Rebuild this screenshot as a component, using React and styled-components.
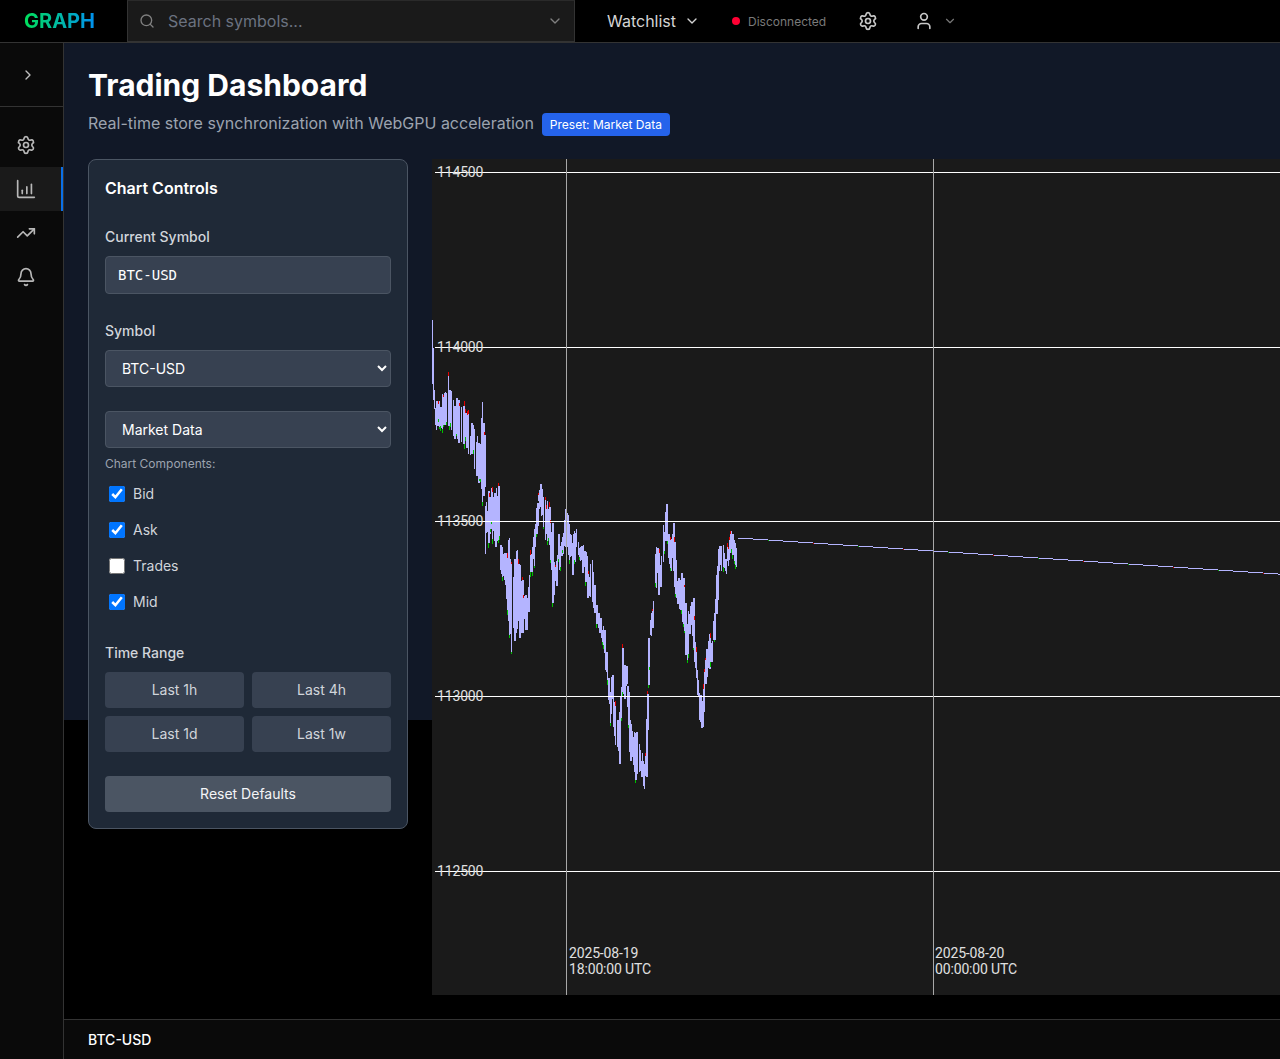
import React from 'react';
import styled, { createGlobalStyle } from 'styled-components';
import { Search, ChevronDown, ChevronRight, Settings, TrendingUp, Bell, User } from 'lucide-react';

const GlobalStyle = createGlobalStyle`
    html, body {
        margin: 0;
        height: 100%;
        overflow: hidden;
        background: #000;
    }
    body {
        font-family: Inter, "Liberation Sans", sans-serif;
        color: #fff;
    }
    * { box-sizing: border-box; }
`;

const Page = styled.div`
    width: 1280px;
    height: 1059px;
    display: flex;
    flex-direction: column;
    background: #000;
`;

const Header = styled.header`
    height: 43px;
    flex: none;
    display: flex;
    align-items: stretch;
    background: #000;
    border-bottom: 1px solid #333;
`;

const Logo = styled.div`
    width: 127px;
    padding-left: 24px;
    display: flex;
    align-items: center;
    font-size: 20px;
    font-weight: 700;
`;

const LogoText = styled.span`
    background: linear-gradient(90deg, #00e05a, #0090f0);
    -webkit-background-clip: text;
    background-clip: text;
    color: transparent;
`;

const SearchBox = styled.div`
    width: 448px;
    height: 42px;
    display: flex;
    align-items: center;
    padding: 0 11px;
    gap: 13px;
    background: #1a1a1a;
    border: 1px solid #333;
    border-top-color: #2a2a2a;
    color: #808080;
`;

const SearchInput = styled.input`
    flex: 1;
    min-width: 0;
    border: 0;
    outline: 0;
    padding: 0;
    background: transparent;
    color: #fff;
    font: 400 16px Inter, sans-serif;
    &::placeholder { color: #6b7280; opacity: 1; }
`;

const HeaderNav = styled.div`
    display: flex;
    align-items: center;
    padding-left: 32px;
`;

const Watchlist = styled.div`
    display: flex;
    align-items: center;
    gap: 8px;
    font-size: 16px;
    color: #d4d4d4;
    margin-right: 32px;
`;

const Status = styled.div`
    display: flex;
    align-items: center;
    gap: 8px;
    font-size: 12px;
    color: #7a7a7a;
    margin-right: 32px;
`;

const Dot = styled.span`
    width: 8px;
    height: 8px;
    border-radius: 50%;
    background: #ff0033;
`;

const HeaderIcon = styled.div`
    display: flex;
    align-items: center;
    gap: ${(props) => props.gap || 0}px;
    margin-right: ${(props) => props.right || 0}px;
    color: #c8c8c8;
`;

const MutedChevron = styled(ChevronDown)`
    color: #777;
`;

const Body = styled.div`
    flex: 1;
    min-height: 0;
    display: flex;
`;

const Sidebar = styled.aside`
    width: 64px;
    flex: none;
    background: #0a0a0a;
    border-right: 1px solid #333;
`;

const SideToggle = styled.div`
    height: 64px;
    display: flex;
    align-items: center;
    justify-content: center;
    padding-right: 7px;
    border-bottom: 1px solid #333;
    color: #c0c0c0;
`;

const SideNav = styled.nav`
    padding-top: 16px;
`;

const SideItem = styled.div`
    height: 44px;
    display: flex;
    align-items: center;
    justify-content: center;
    color: #b8b8b8;
    padding-right: 9px;
    background: ${(props) => (props.active ? '#1a1a1a' : 'transparent')};
    border-right: 2px solid ${(props) => (props.active ? '#0a6fe8' : 'transparent')};
`;

const Main = styled.div`
    flex: 1;
    min-width: 0;
    display: flex;
    flex-direction: column;
`;

const Content = styled.main`
    flex: 1;
    min-height: 0;
`;

const Backdrop = styled.div`
    height: 677px;
    padding: 24px 0 0 24px;
    background: #111827;
`;

const Title = styled.h1`
    margin: 0;
    font-size: 30px;
    line-height: 36px;
    font-weight: 700;
    color: #fff;
`;

const SubRow = styled.div`
    margin-top: 8px;
    height: 24px;
    display: flex;
    align-items: center;
    gap: 8px;
`;

const Subtitle = styled.span`
    font-size: 16px;
    line-height: 24px;
    color: #9ca3af;
`;

const Badge = styled.span`
    margin-top: 3px;
    padding: 0 8px;
    height: 23px;
    display: flex;
    align-items: center;
    font-size: 12px;
    font-weight: 400;
    border-radius: 4px;
    background: #2563eb;
    color: #fff;
`;

const Columns = styled.div`
    margin-top: 24px;
    display: flex;
    align-items: flex-start;
    gap: 24px;
`;

const Panel = styled.section`
    width: 320px;
    flex: none;
    height: 670px;
    padding: 16px;
    background: #1f2937;
    border: 1px solid #4b5563;
    border-radius: 8px;
`;

const PanelTitle = styled.h3`
    margin: 0 0 27px;
    font-size: 16px;
    line-height: 24px;
    font-weight: 600;
    color: #fff;
`;

const FieldLabel = styled.div`
    font-size: 14px;
    line-height: 20px;
    font-weight: 500;
    color: #d1d5db;
    margin-bottom: 9px;
`;

const SymbolValue = styled.div`
    height: 38px;
    display: flex;
    align-items: center;
    padding: 0 12px;
    margin-bottom: 27px;
    background: #374151;
    border: 1px solid #4b5563;
    border-radius: 4px;
    font: 400 14px "DejaVu Sans Mono", "Liberation Mono", monospace;
    color: #fff;
`;

const Select = styled.select`
    display: block;
    width: 100%;
    height: 37px;
    margin-bottom: ${(props) => props.bottom || 0}px;
    padding: 0 12px;
    background-color: #374151;
    border: 1px solid #4b5563;
    border-radius: 4px;
    color: #fff;
    font: 400 14px Inter, sans-serif;
    outline: 0;
`;

const SmallLabel = styled.div`
    margin-top: 8px;
    font-size: 12px;
    line-height: 16px;
    color: #9ca3af;
`;

const CheckList = styled.div`
    margin-top: 4px;
    margin-bottom: 23px;
`;

const CheckRow = styled.label`
    height: 36px;
    display: flex;
    align-items: center;
    gap: 8px;
    padding-left: 4px;
    font-size: 14px;
    line-height: 20px;
    color: #d1d5db;
`;

const Check = styled.input`
    width: 16px;
    height: 16px;
    margin: 0;
`;

const RangeGrid = styled.div`
    display: grid;
    grid-template-columns: 1fr 1fr;
    gap: 8px;
    margin-bottom: 24px;
`;

const Button = styled.button`
    height: 36px;
    border: 0;
    border-radius: 4px;
    background: ${(props) => (props.strong ? '#4b5563' : '#374151')};
    color: ${(props) => (props.strong ? '#f3f4f6' : '#d1d5db')};
    font: 400 14px Inter, sans-serif;
    width: ${(props) => (props.strong ? '100%' : 'auto')};
    padding: 0 0 2px;
`;

const ChartBox = styled.div`
    flex: 1;
    min-width: 0;
    height: 836px;
    background: #1a1a1a;
`;

const ChartSvg = styled.svg`
    display: block;
    width: 848px;
    height: 836px;
`;

const AxisText = styled.text`
    font: 400 14px Roboto, sans-serif;
    letter-spacing: -0.15px;
    fill: #e0e0e0;
`;

const Footer = styled.footer`
    height: 40px;
    flex: none;
    display: flex;
    align-items: center;
    padding-left: 24px;
    background: #0a0a0a;
    border-top: 1px solid #333;
    font-size: 14px;
    font-weight: 500;
    color: #fff;
`;

// axis with three bars, taller and wider than the lucide chart icon
const BarsIcon = () => (
    <svg width="20" height="20" viewBox="0 0 24 24" fill="none" stroke="currentColor" strokeWidth="2" strokeLinecap="round" strokeLinejoin="round">
        <path d="M2 2v18a2 2 0 0 0 2 2h18" />
        <path d="M7.5 17.5v-4" />
        <path d="M13 17.5v-8" />
        <path d="M18.5 17.5v-11" />
    </svg>
);

// envelope read off the reference: x, high, low (page coords)
const KEYS = [
    [434, 388, 420], [436, 398, 430], [440, 398, 432], [444, 392, 428], [448, 380, 430],
    [452, 400, 435], [456, 400, 438], [460, 403, 450], [464, 402, 440], [466, 406, 445], [468, 410, 450],
    [472, 420, 462], [476, 440, 478], [480, 440, 482], [482, 405, 505], [484, 435, 495], [485, 497, 557],
    [490, 488, 537], [494, 492, 545], [498, 483, 540], [500, 540, 567], [505, 563, 590], [508, 525, 630],
    [512, 580, 662], [516, 545, 627], [520, 573, 643], [524, 595, 630], [527, 593, 630], [530, 557, 577],
    [534, 530, 567], [538, 488, 510], [541, 487, 523], [545, 497, 537], [549, 505, 545], [552, 523, 603],
    [555, 567, 587], [558, 535, 570], [562, 540, 560], [565, 507, 550], [568, 520, 553], [572, 533, 578],
    [576, 527, 550], [580, 543, 557], [584, 547, 580], [588, 567, 600], [592, 558, 600], [596, 607, 627],
    [600, 613, 630], [604, 632, 660], [607, 668, 683], [610, 690, 728], [612, 670, 713], [615, 707, 753],
    [618, 720, 760], [620, 697, 760], [622, 653, 697], [626, 670, 693], [630, 723, 770], [633, 710, 778],
    [637, 743, 777], [641, 752, 775], [644, 768, 793], [646, 717, 780], [648, 643, 690], [650, 618, 643],
    [653, 595, 620], [654, 552, 600], [657, 540, 587], [660, 558, 598], [663, 520, 563], [666, 503, 533],
    [669, 543, 563], [673, 523, 578], [676, 577, 600], [680, 578, 610], [683, 572, 623], [687, 623, 680],
    [690, 602, 617], [693, 603, 653], [696, 653, 683], [699, 690, 730], [702, 700, 728], [705, 657, 687],
    [708, 627, 667], [712, 640, 657], [715, 597, 640], [718, 547, 577], [722, 543, 570], [726, 558, 573],
    [730, 528, 550], [733, 537, 560], [736, 540, 567],
];

const ORIGIN_X = 432;
const ORIGIN_Y = 159;
const GRID_Y = [172, 347, 521, 696, 871];
const GRID_LABELS = ['114500', '114000', '113500', '113000', '112500'];

const buildBars = () => {
    let seed = 4711;
    const rnd = () => {
        seed = (seed * 16807) % 2147483647;
        return seed / 2147483647;
    };
    // the opening spike and the column after it are fixed
    const bars = [
        { x: 432, hi: 320, lo: 384, width: 1 },
        { x: 433, hi: 348, lo: 400, width: 1 },
    ];
    let k = 0;
    for (let x = 434; x <= 736; x++) {
        while (k < KEYS.length - 2 && KEYS[k + 1][0] <= x) k++;
        const [x0, hi0, lo0] = KEYS[k];
        const [x1, hi1, lo1] = KEYS[k + 1];
        const t = Math.min(1, (x - x0) / (x1 - x0));
        const drift = (rnd() - 0.5) * 10;
        let hi = hi0 + (hi1 - hi0) * t + drift;
        let lo = lo0 + (lo1 - lo0) * t + drift;
        const range = lo - hi;
        if (rnd() > 0.25) {
            // most columns are a body inside the envelope
            hi += rnd() * rnd() * range * 0.45;
            lo -= rnd() * rnd() * range * 0.45;
        }
        bars.push({
            x,
            hi: Math.round(hi),
            lo: Math.round(lo),
            width: rnd() < 0.45 ? 2 : 1,
            skip: rnd() < 0.05,
            red: rnd() < 0.16,
            green: rnd() < 0.18,
            cap: 2 + Math.round(rnd() * 3),
        });
    }
    return bars;
};

const BARS = buildBars().filter((b) => !b.skip);

// the flat end of the series is a shallow staircase, one pixel per 15
const TAIL = Array.from({ length: 37 }, (_, i) => ({
    x: 738 + i * 15,
    y: 538 + i,
    tick: i % 3 === 2 ? (i % 2 ? '#e00000' : '#00c000') : null,
}));

const Chart = () => (
    <ChartBox>
        <ChartSvg viewBox={`${ORIGIN_X} ${ORIGIN_Y} 848 836`} shapeRendering="crispEdges">
            {BARS.map((b) => (
                <g key={b.x}>
                    <rect x={b.x} y={b.hi} width={b.width} height={Math.max(1, b.lo - b.hi)} fill="#b4b4ff" />
                    {b.red && <rect x={b.x} y={b.hi - b.cap} width="1" height={b.cap} fill="#e00000" />}
                    {b.green && <rect x={b.x} y={b.lo} width="1" height={b.cap} fill="#00c000" />}
                </g>
            ))}
            {TAIL.map((s) => (
                <g key={s.x}>
                    <rect x={s.x} y={s.y} width="15" height="1" fill="#b4b4ff" />
                    {s.tick && <rect x={s.x} y={s.y} width="1" height="1" fill={s.tick} />}
                </g>
            ))}
            {GRID_Y.map((y) => (
                <rect key={y} x="435" y={y} width="845" height="1" fill="#fff" />
            ))}
            <rect x="566" y="159" width="1" height="836" fill="#a8a8a8" />
            <rect x="933" y="159" width="1" height="836" fill="#a8a8a8" />
            {GRID_Y.map((y, i) => (
                <AxisText key={y} x="437" y={y + 5}>{GRID_LABELS[i]}</AxisText>
            ))}
            <AxisText x="569" y="958">2025-08-19</AxisText>
            <AxisText x="569" y="974">18:00:00 UTC</AxisText>
            <AxisText x="935" y="958">2025-08-20</AxisText>
            <AxisText x="935" y="974">00:00:00 UTC</AxisText>
        </ChartSvg>
    </ChartBox>
);

const Controls = () => (
    <Panel>
        <PanelTitle>Chart Controls</PanelTitle>
        <FieldLabel>Current Symbol</FieldLabel>
        <SymbolValue>BTC-USD</SymbolValue>
        <FieldLabel>Symbol</FieldLabel>
        <Select bottom={24} defaultValue="BTC-USD">
            <option>BTC-USD</option>
            <option>ETH-USD</option>
        </Select>
        <Select defaultValue="Market Data">
            <option>Market Data</option>
            <option>Custom</option>
        </Select>
        <SmallLabel>Chart Components:</SmallLabel>
        <CheckList>
            <CheckRow><Check type="checkbox" defaultChecked />Bid</CheckRow>
            <CheckRow><Check type="checkbox" defaultChecked />Ask</CheckRow>
            <CheckRow><Check type="checkbox" />Trades</CheckRow>
            <CheckRow><Check type="checkbox" defaultChecked />Mid</CheckRow>
        </CheckList>
        <FieldLabel>Time Range</FieldLabel>
        <RangeGrid>
            <Button>Last 1h</Button>
            <Button>Last 4h</Button>
            <Button>Last 1d</Button>
            <Button>Last 1w</Button>
        </RangeGrid>
        <Button strong>Reset Defaults</Button>
    </Panel>
);

const App = () => (
    <Page>
        <GlobalStyle />
        <Header>
            <Logo><LogoText>GRAPH</LogoText></Logo>
            <SearchBox>
                <Search size={16} />
                <SearchInput placeholder="Search symbols..." readOnly />
                <ChevronDown size={16} />
            </SearchBox>
            <HeaderNav>
                <Watchlist>Watchlist<ChevronDown size={16} /></Watchlist>
                <Status><Dot />Disconnected</Status>
                <HeaderIcon right={36}><Settings size={20} /></HeaderIcon>
                <HeaderIcon gap={9}><User size={20} /><MutedChevron size={14} /></HeaderIcon>
            </HeaderNav>
        </Header>
        <Body>
            <Sidebar>
                <SideToggle><ChevronRight size={16} /></SideToggle>
                <SideNav>
                    <SideItem><Settings size={20} /></SideItem>
                    <SideItem active><BarsIcon /></SideItem>
                    <SideItem><TrendingUp size={20} /></SideItem>
                    <SideItem><Bell size={20} /></SideItem>
                </SideNav>
            </Sidebar>
            <Main>
                <Content>
                    <Backdrop>
                        <Title>Trading Dashboard</Title>
                        <SubRow>
                            <Subtitle>Real-time store synchronization with WebGPU acceleration</Subtitle>
                            <Badge>Preset: Market Data</Badge>
                        </SubRow>
                        <Columns>
                            <Controls />
                            <Chart />
                        </Columns>
                    </Backdrop>
                </Content>
                <Footer>BTC-USD</Footer>
            </Main>
        </Body>
    </Page>
);

export default App;
